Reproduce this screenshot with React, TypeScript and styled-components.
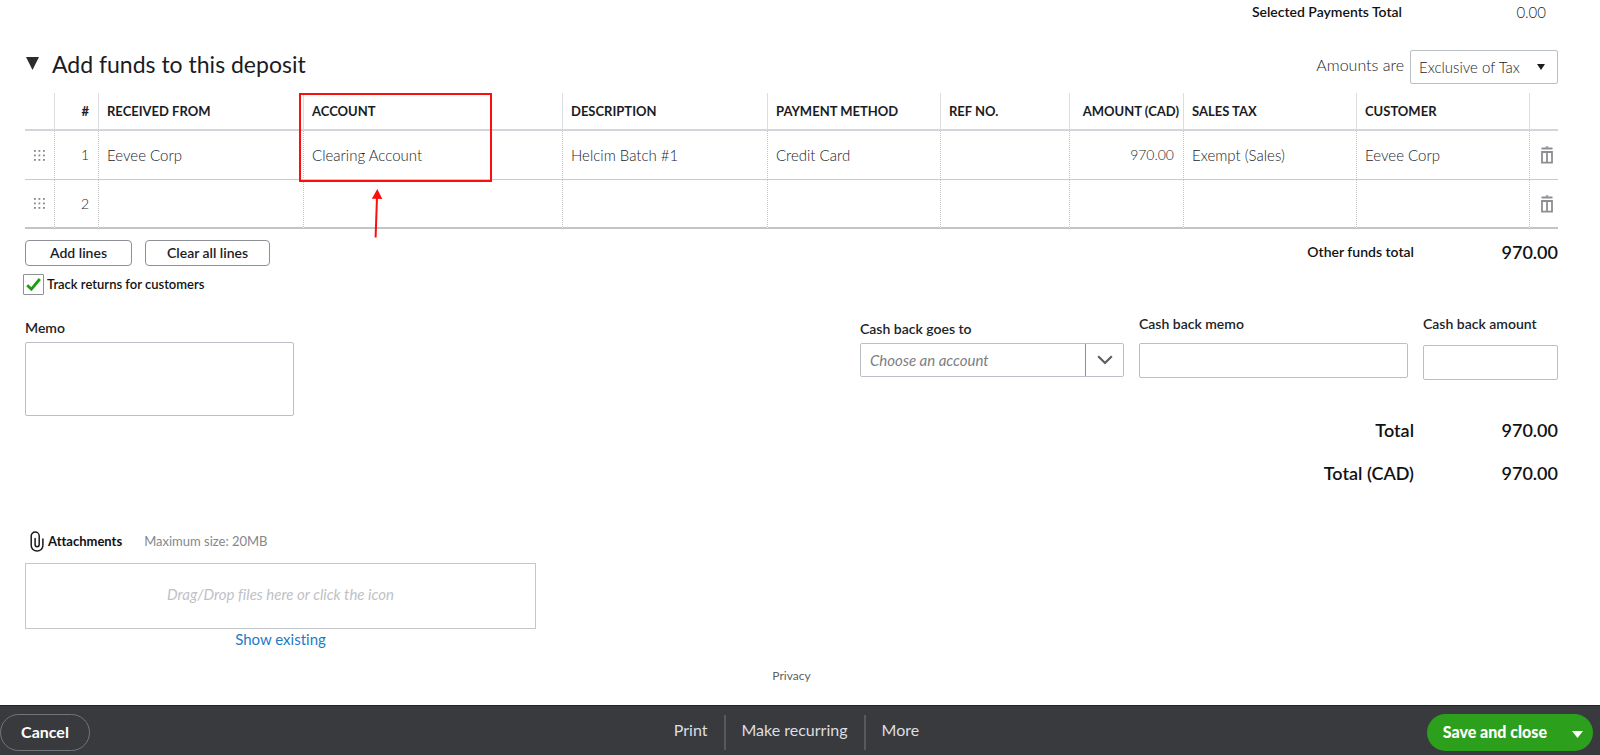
import React from 'react';
import styled, { createGlobalStyle } from 'styled-components';

const GlobalStyle = createGlobalStyle`
  *, *::before, *::after { box-sizing: border-box; }
  body {
    margin: 0;
    background: #fff;
    color: #1b1c1f;
    font-family: Lato, "Open Sans", sans-serif;
    font-size: 14px;
    line-height: 20px;
    font-variant-ligatures: none;
  }
  button, input, select, textarea { font: inherit; color: inherit; font-variant-ligatures: none; }
`;

const Page = styled.div`
  min-height: 100vh;
  display: flex;
  flex-direction: column;
`;

const Main = styled.main`
  flex: 1;
  padding: 0 42px 19px 25px;
`;

const TotalLine = styled.div<{ $inset?: boolean }>`
  display: flex;
  justify-content: flex-end;
  align-items: center;
  line-height: 24px;
  padding-right: ${(p) => (p.$inset ? '12px' : '0')};
`;

const TotalLabel = styled.span<{ $large?: boolean }>`
  font-size: ${(p) => (p.$large ? '18px' : '14px')};
  font-weight: 600;
  color: #111214;
`;

const TotalValue = styled.span<{ $light?: boolean }>`
  width: 144px;
  text-align: right;
  font-size: ${(p) => (p.$light ? '15px' : '18px')};
  font-weight: ${(p) => (p.$light ? 300 : 600)};
  color: ${(p) => (p.$light ? '#1b1c1f' : '#111214')};
`;

const SectionHead = styled.div`
  display: flex;
  justify-content: space-between;
  margin: 26px 0 9px;
`;

const SectionTitle = styled.h2`
  display: flex;
  align-items: center;
  gap: 13px;
  height: 27px;
  margin: 0;
  padding-left: 1px;
  font-size: 23px;
  font-weight: 400;
`;

const TaxMode = styled.div`
  display: flex;
  align-items: center;
  gap: 6px;
  color: #1b1c1f;
  font-weight: 300;
`;

const TaxLabel = styled.label`
  font-size: 16px;
  padding-bottom: 4px;
`;

const SelectWrap = styled.span`
  display: grid;
  align-items: center;
  > * { grid-area: 1 / 1; }
  > svg { justify-self: end; margin-right: 13px; pointer-events: none; }
`;

const Select = styled.select`
  appearance: none;
  width: 148px;
  height: 34px;
  padding: 0 24px 0 8px;
  border: 1px solid #babec5;
  border-radius: 2px;
  background: #fff;
  font-size: 15px;
`;

const TableWrap = styled.div`
  position: relative;
`;

const Table = styled.table`
  width: 100%;
  table-layout: fixed;
  border-collapse: separate;
  border-spacing: 0;
`;

const HeadCell = styled.th<{ $right?: boolean }>`
  height: 38px;
  padding: 0 0 0 8px;
  border-bottom: 2px solid #d4d5da;
  border-right: 1px solid #dcdde1;
  text-align: ${(p) => (p.$right ? 'right' : 'left')};
  font-size: 13px;
  font-weight: 700;
  white-space: nowrap;
  &:nth-child(2) { padding-right: 9px; }
  &:nth-child(8) { padding-right: 4px; }
  &:last-child { border-right: 0; }
`;

const Cell = styled.td<{ $right?: boolean; $icon?: boolean }>`
  height: 49px;
  padding: ${(p) => (p.$icon ? '0' : '0 9px 0 8px')};
  border-bottom: 1px solid #c9cacc;
  border-right: 1px dotted #c4c5c8;
  text-align: ${(p) => (p.$right ? 'right' : 'left')};
  font-size: ${(p) => (p.$right ? '14px' : '15px')};
  font-weight: 300;
  color: #1b1c1f;
  &:last-child { border-right: 0; }
  tr:last-child > & { border-bottom: 2px solid #c3c4c6; }
`;

const IconButton = styled.button`
  display: flex;
  margin: 0 auto;
  padding: 0;
  border: 0;
  background: none;
  cursor: pointer;
  td:last-child > & { margin-right: 5px; }
`;

const Highlight = styled.div`
  position: absolute;
  left: 274px;
  top: 0;
  width: 193px;
  height: 89px;
  border: 2px solid #fb0f0c;
  pointer-events: none;
`;

const Arrow = styled.svg`
  position: absolute;
  left: 345px;
  top: 95px;
  pointer-events: none;
`;

const Actions = styled.div`
  display: flex;
  gap: 13px;
  margin-top: 11px;
`;

const ActionsTotal = styled.div`
  margin-left: auto;
`;

const LineButton = styled.button`
  height: 26px;
  padding: 0 21px;
  min-width: 107px;
  border: 1px solid #8d9096;
  border-radius: 4px;
  background: #fff;
  font-size: 14px;
  font-weight: 600;
  line-height: 20px;
`;

const CheckLabel = styled.label`
  display: flex;
  width: fit-content;
  gap: 3px;
  margin: 8px 0 0 -2px;
  font-size: 13px;
  font-weight: 600;
  color: #111214;
`;

const CheckBox = styled.span`
  display: grid;
  place-items: center;
  > * { grid-area: 1 / 1; }
  > svg { display: none; pointer-events: none; }
  > input:checked + svg { display: block; }
`;

const CheckInput = styled.input`
  appearance: none;
  width: 21px;
  height: 21px;
  margin: 0;
  border: 1px solid #8d9096;
  border-radius: 1px;
`;

const Details = styled.div`
  display: flex;
  justify-content: space-between;
  align-items: flex-start;
  margin-top: 19px;
`;

const Field = styled.div<{ $width: number; $top: number; $gap: number }>`
  display: flex;
  flex-direction: column;
  width: ${(p) => p.$width}px;
  padding-top: ${(p) => p.$top}px;
  gap: ${(p) => p.$gap}px;
`;

const FieldLabel = styled.label`
  font-size: 14px;
  font-weight: 600;
  color: #222326;
`;

const TextBox = styled.input`
  width: 100%;
  height: 35px;
  padding: 0 9px;
  border: 1px solid #babec5;
  border-radius: 2px;
  background: #fff;
`;

const MemoBox = styled.textarea`
  display: block;
  width: 100%;
  height: 74px;
  padding: 8px;
  border: 1px solid #babec5;
  border-radius: 2px;
  resize: none;
`;

const Combo = styled.div`
  display: flex;
  height: 34px;
  border: 1px solid #babec5;
  border-radius: 2px;
`;

const ComboInput = styled.input`
  flex: 1;
  min-width: 0;
  padding: 0 9px;
  border: 0;
  background: none;
  font-size: 15px;
  font-style: italic;
  &::placeholder { color: #7c7e83; opacity: 1; }
`;

const ComboButton = styled.button`
  display: grid;
  place-items: center;
  width: 38px;
  padding: 0;
  border: 0;
  border-left: 1px solid #8d9096;
  background: none;
`;

const CashFields = styled.div`
  display: flex;
  gap: 15px;
`;

const Totals = styled.div`
  display: flex;
  flex-direction: column;
  gap: 19px;
  margin-top: 38px;
`;

const Attachments = styled.section`
  width: 511px;
  max-width: 100%;
  margin-top: 46px;
`;

const AttachHead = styled.div`
  display: flex;
  align-items: center;
  height: 20px;
  padding-left: 5px;
  font-size: 13px;
`;

const AttachTitle = styled.span`
  margin: 0 22px 0 4px;
  font-weight: 700;
  color: #111214;
`;

const Muted = styled.span`
  color: #85878c;
`;

const DropZone = styled.button`
  display: block;
  width: 100%;
  height: 66px;
  margin-top: 12px;
  padding: 0 0 4px;
  border: 1px solid #c6c7ca;
  background: #fff;
  color: #bfc1c6;
  font-size: 15px;
  font-style: italic;
`;

const ShowExisting = styled.a`
  display: block;
  width: fit-content;
  margin: 0 auto;
  color: #1c7cc7;
  font-size: 15px;
  text-decoration: none;
`;

const Privacy = styled.a`
  display: block;
  width: fit-content;
  margin: 17px auto 0;
  color: #5d5f64;
  font-size: 12px;
  text-decoration: none;
`;

const Footer = styled.footer`
  display: grid;
  grid-template-columns: 1fr auto 1fr;
  align-items: center;
  height: 50px;
  padding: 3px 7px 0 0;
  background: #393a3d;
  border-top: 1px solid #232427;
`;

const CancelButton = styled.button`
  justify-self: start;
  width: 90px;
  height: 37px;
  border: 1px solid #73757a;
  border-radius: 19px;
  background: none;
  color: #fff;
  font-size: 16px;
  font-weight: 700;
`;

const FooterLinks = styled.nav`
  display: flex;
`;

const FooterLink = styled.button`
  height: 35px;
  padding: 0 16px 4px;
  border: 0;
  border-left: 2px solid #57595d;
  background: none;
  color: #dddee0;
  font-size: 16px;
  &:first-child { border-left: 0; }
`;

const SaveGroup = styled.div`
  justify-self: end;
  display: flex;
  height: 37px;
  border-radius: 19px;
  background: #2ca01c;
`;

const SaveButton = styled.button`
  padding: 0 0 0 16px;
  border: 0;
  background: none;
  color: #fff;
  font-size: 16px;
  font-weight: 900;
`;

const SaveMore = styled.button`
  display: flex;
  align-items: center;
  padding: 4px 10px 0 25px;
  border: 0;
  background: none;
`;

const Triangle = ({ w, h, color }: { w: number; h: number; color: string }) => (
  <svg width={w} height={h} viewBox={`0 0 ${w} ${h}`} aria-hidden="true">
    <path d={`M0 0H${w}L${w / 2} ${h}Z`} fill={color} />
  </svg>
);

const DragDots = () => (
  <svg width="11" height="11" viewBox="0 0 11 11" fill="#85878c" aria-hidden="true">
    {[0, 4.5, 9].map((y) =>
      [0, 4.5, 9].map((x) => <rect key={`${x}-${y}`} x={x} y={y} width="1.8" height="1.8" />)
    )}
  </svg>
);

const TrashIcon = () => (
  <svg width="12" height="18" viewBox="0 0 12 18" fill="none" stroke="#8c8e92" aria-hidden="true">
    <path d="M0.5 2.5H11.5" strokeWidth="2" />
    <path d="M4.8 1H7.2" strokeWidth="1.4" />
    <path d="M1 6H11V16.6H1Z" strokeWidth="1.8" />
    <path d="M6 5.5V16" strokeWidth="1.8" />
  </svg>
);

const PaperClip = () => (
  <svg width="14" height="21" viewBox="0 0 14 21" fill="none" stroke="#1b1c1f" strokeWidth="1.5" strokeLinecap="round" aria-hidden="true">
    <path d="M12.9 8V14.6A5.8 5.4 0 0 1 1.2 14.6V5A4 4 0 0 1 9.2 5V13.6A2 2.1 0 0 1 5.1 13.6V7.5" />
  </svg>
);

const columns = [
  { label: '', width: 30 },
  { label: '#', width: 44, right: true },
  { label: 'RECEIVED FROM', width: 205 },
  { label: 'ACCOUNT' },
  { label: 'DESCRIPTION', width: 205 },
  { label: 'PAYMENT METHOD', width: 173 },
  { label: 'REF NO.', width: 129 },
  { label: 'AMOUNT (CAD)', width: 114, right: true },
  { label: 'SALES TAX', width: 173 },
  { label: 'CUSTOMER', width: 173 },
  { label: '', width: 28 },
];

const rows = [
  ['1', 'Eevee Corp', 'Clearing Account', 'Helcim Batch #1', 'Credit Card', '', '970.00', 'Exempt (Sales)', 'Eevee Corp'],
  ['2', '', '', '', '', '', '', '', ''],
];

export default function App() {
  return (
    <Page>
      <GlobalStyle />
      <Main>
        <TotalLine $inset>
          <TotalLabel>Selected Payments Total</TotalLabel>
          <TotalValue $light>0.00</TotalValue>
        </TotalLine>

        <SectionHead>
          <SectionTitle>
            <Triangle w={13} h={13} color="#2b2c2f" />
            Add funds to this deposit
          </SectionTitle>
          <TaxMode>
            <TaxLabel htmlFor="tax-mode">Amounts are</TaxLabel>
            <SelectWrap>
              <Select id="tax-mode" defaultValue="exclusive">
                <option value="exclusive">Exclusive of Tax</option>
                <option value="inclusive">Inclusive of Tax</option>
              </Select>
              <Triangle w={8} h={6} color="#1b1c1f" />
            </SelectWrap>
          </TaxMode>
        </SectionHead>

        <TableWrap>
          <Table>
            <colgroup>
              {columns.map((c, i) => (
                <col key={i} width={c.width} />
              ))}
            </colgroup>
            <thead>
              <tr>
                {columns.map((c, i) => (
                  <HeadCell key={i} $right={c.right} scope="col">{c.label}</HeadCell>
                ))}
              </tr>
            </thead>
            <tbody>
              {rows.map((row) => (
                <tr key={row[0]}>
                  <Cell $icon>
                    <IconButton type="button" aria-label={`Move line ${row[0]}`}><DragDots /></IconButton>
                  </Cell>
                  {row.map((text, i) => (
                    <Cell key={i} $right={i === 0 || i === 6}>{text}</Cell>
                  ))}
                  <Cell $icon>
                    <IconButton type="button" aria-label={`Delete line ${row[0]}`}><TrashIcon /></IconButton>
                  </Cell>
                </tr>
              ))}
            </tbody>
          </Table>
          <Highlight />
          <Arrow width="14" height="52" viewBox="0 0 14 52" aria-hidden="true">
            <path d="M7 9L5.6 49.5" stroke="#fb0f0c" strokeWidth="2" fill="none" />
            <path d="M7.3 1L12.3 11L1.8 10.8Z" fill="#fb0f0c" />
          </Arrow>
        </TableWrap>

        <Actions>
          <LineButton type="button">Add lines</LineButton>
          <LineButton type="button">Clear all lines</LineButton>
          <ActionsTotal>
            <TotalLine>
              <TotalLabel>Other funds total</TotalLabel>
              <TotalValue>970.00</TotalValue>
            </TotalLine>
          </ActionsTotal>
        </Actions>

        <CheckLabel>
          <CheckBox>
            <CheckInput type="checkbox" defaultChecked />
            <svg width="15" height="13" viewBox="0 0 15 13" fill="none" aria-hidden="true">
              <path d="M1.2 7.2L5.4 11.2L13.8 1" stroke="#1f9d12" strokeWidth="2.8" />
            </svg>
          </CheckBox>
          Track returns for customers
        </CheckLabel>

        <Details>
          <Field $width={269} $top={4} $gap={4}>
            <FieldLabel htmlFor="memo">Memo</FieldLabel>
            <MemoBox id="memo" />
          </Field>
          <div>
            <CashFields>
              <Field $width={264} $top={5} $gap={4}>
                <FieldLabel htmlFor="cash-account">Cash back goes to</FieldLabel>
                <Combo>
                  <ComboInput id="cash-account" placeholder="Choose an account" />
                  <ComboButton type="button" aria-label="Show accounts">
                    <svg width="16" height="10" viewBox="0 0 16 10" fill="none" aria-hidden="true">
                      <path d="M1.2 1.2L8 8L14.8 1.2" stroke="#5d5f64" strokeWidth="2.2" />
                    </svg>
                  </ComboButton>
                </Combo>
              </Field>
              <Field $width={269} $top={0} $gap={9}>
                <FieldLabel htmlFor="cash-memo">Cash back memo</FieldLabel>
                <TextBox id="cash-memo" />
              </Field>
              <Field $width={135} $top={0} $gap={11}>
                <FieldLabel htmlFor="cash-amount">Cash back amount</FieldLabel>
                <TextBox id="cash-amount" />
              </Field>
            </CashFields>
            <Totals>
              <TotalLine>
                <TotalLabel $large>Total</TotalLabel>
                <TotalValue>970.00</TotalValue>
              </TotalLine>
              <TotalLine>
                <TotalLabel $large>Total (CAD)</TotalLabel>
                <TotalValue>970.00</TotalValue>
              </TotalLine>
            </Totals>
          </div>
        </Details>

        <Attachments>
          <AttachHead>
            <PaperClip />
            <AttachTitle>Attachments</AttachTitle>
            <Muted>Maximum size: 20MB</Muted>
          </AttachHead>
          <DropZone type="button">Drag/Drop files here or click the icon</DropZone>
          <ShowExisting href="#existing">Show existing</ShowExisting>
        </Attachments>

        <Privacy href="#privacy">Privacy</Privacy>
      </Main>

      <Footer>
        <CancelButton type="button">Cancel</CancelButton>
        <FooterLinks>
          <FooterLink type="button">Print</FooterLink>
          <FooterLink type="button">Make recurring</FooterLink>
          <FooterLink type="button">More</FooterLink>
        </FooterLinks>
        <SaveGroup>
          <SaveButton type="button">Save and close</SaveButton>
          <SaveMore type="button" aria-label="More save options">
            <Triangle w={11} h={7} color="#fff" />
          </SaveMore>
        </SaveGroup>
      </Footer>
    </Page>
  );
}
